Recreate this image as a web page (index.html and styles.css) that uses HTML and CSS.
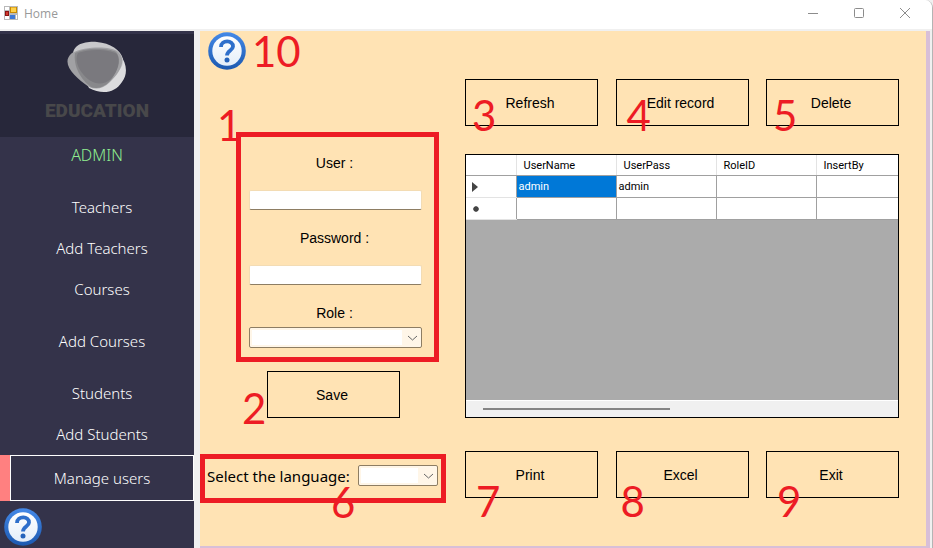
FILE: index.html
```html
<!DOCTYPE html>
<html lang="en">
<head>
<meta charset="utf-8">
<title>Home</title>
<link rel="stylesheet" href="styles.css">
</head>
<body>
<svg class="defs" aria-hidden="true">
  <defs>
    <linearGradient id="ring" x1="0" y1="0" x2="0" y2="1">
      <stop offset="0" stop-color="#4489e8"/><stop offset="1" stop-color="#1c59b0"/>
    </linearGradient>
    <linearGradient id="face" x1="0" y1="0" x2="0" y2="1">
      <stop offset="0" stop-color="#ffffff"/><stop offset="1" stop-color="#e4eef9"/>
    </linearGradient>
    <symbol id="help" viewBox="0 0 38 38">
      <circle cx="19" cy="19" r="18.8" fill="url(#ring)"/>
      <circle cx="19" cy="19" r="14.7" fill="url(#face)"/>
      <path d="M13 15 C13 7.600 25.400 7.600 25 14.600 C24.700 18.600 19 18.600 19 23.600" fill="none" stroke="#2e6fcb" stroke-width="3.8"/>
      <circle cx="19" cy="28" r="2.5" fill="#2563bb"/>
    </symbol>
  </defs>
</svg>
<div class="window">
  <header class="titlebar">
    <svg class="app-icon" viewBox="0 0 14 14" aria-hidden="true">
      <path d="M0 0H14V14H0Z" fill="#b9b9b9"/>
      <path d="M1 1H5V4H1ZM1 10H5V13H1Z" fill="#fff"/>
      <path d="M6 1H13V7H6Z" fill="#c98a00"/><path d="M7 1.500H12V6H7Z" fill="#ffd24a"/>
      <path d="M1 5H5V10H1Z" fill="#8c1313"/><path d="M2 6H4V9H2Z" fill="#d23a2e"/>
      <path d="M6 9H11V13H6Z" fill="#3c78d8"/><path d="M12 9H13V13H12Z" fill="#fff"/>
    </svg>
    <h1 class="title">Home</h1>
    <button class="win-btn" aria-label="Minimize"><svg viewBox="0 0 12 12"><path d="M1 6.500H11"/></svg></button>
    <button class="win-btn" aria-label="Maximize"><svg viewBox="0 0 12 12"><rect x="1.500" y="1.500" width="9" height="9" rx="1"/></svg></button>
    <button class="win-btn" aria-label="Close"><svg viewBox="0 0 12 12"><path d="M1 1L11 11M11 1L1 11"/></svg></button>
  </header>
  <div class="body">
    <aside class="sidebar">
      <div class="brand">
        <svg class="brand-mark" viewBox="0 0 60 52" aria-hidden="true">
          <path d="M53 14 C60 22 61 33 55 41 C48 52 35 54 22 47 L10 22 Z" fill="#dcdcde"/>
          <path d="M6 15 C5 3 19 0 30 1 C43 2 54 9 56 18 C57 24 53 30 46 34 L12 30 C8 24 6 18 6 15Z" fill="#c9c9cb"/>
          <path d="M5 12 C18 5 43 5 50 10 C61 18 53 32 43 41 C36 48 29 49 22 46 C7 36 -7 22 5 12Z" fill="#a1a1a4"/>
          <path d="M8 12 C20 6 42 7 49 11 C55 18 50 31 43 40 C36 47 30 48 24 46 C14 39 6 25 8 12Z" fill="#88888b"/>
          <path d="M11 12 C22 8 41 8 50 13 C54 20 51 30 44 38 C37 44 29 43 24 40 C15 35 6 21 11 12Z" fill="#7a797e"/>
        </svg>
        <strong class="brand-name">EDUCATION</strong>
      </div>
      <p class="role">ADMIN</p>
      <nav class="nav">
        <a href="#">Teachers</a>
        <a href="#">Add Teachers</a>
        <a href="#">Courses</a>
        <a href="#" class="spaced">Add Courses</a>
        <a href="#" class="spaced">Students</a>
        <a href="#">Add Students</a>
        <a href="#" class="active">Manage users</a>
      </nav>
      <button class="help side-help" aria-label="Help"><svg><use href="#help"/></svg></button>
    </aside>
    <main class="main">
      <section class="left">
        <div class="help-row">
          <button class="help" aria-label="Help"><svg><use href="#help"/></svg></button>
          <span class="num">10</span>
        </div>
        <form class="user-form">
          <span class="num mark n1">1</span>
          <div class="field"><label for="user">User :</label><input id="user" type="text"></div>
          <div class="field"><label for="pass">Password :</label><input id="pass" type="password"></div>
          <div class="field tight"><label for="role">Role :</label><select id="role"><option></option></select></div>
        </form>
        <div class="save-row"><button class="btn">Save</button><span class="num mark n2">2</span></div>
        <div class="language">
          <label for="lang">Select the language:</label>
          <select id="lang"><option></option></select>
          <span class="num mark n6">6</span>
        </div>
      </section>
      <section class="right">
        <div class="btn-row">
          <div class="cell"><button class="btn">Refresh</button><span class="num mark top">3</span></div>
          <div class="cell"><button class="btn">Edit record</button><span class="num mark top n4">4</span></div>
          <div class="cell"><button class="btn">Delete</button><span class="num mark top">5</span></div>
        </div>
        <div class="grid">
          <div class="grid-view">
            <table>
              <thead><tr><th class="rh"></th><th>UserName</th><th>UserPass</th><th>RoleID</th><th>InsertBy</th></tr></thead>
              <tbody>
                <tr><td class="rh"><svg viewBox="0 0 8 10"><path d="M1 0V10L7 5Z"/></svg></td><td class="selected">admin</td><td>admin</td><td></td><td></td></tr>
                <tr><td class="rh"><svg viewBox="0 0 8 10"><path d="M3 3L5 2L7 3L8 5L7 7L5 8L3 7L2 5Z"/></svg></td><td></td><td></td><td></td><td></td></tr>
              </tbody>
            </table>
          </div>
          <div class="scroll"><div class="thumb"></div></div>
        </div>
        <div class="btn-row">
          <div class="cell"><button class="btn">Print</button><span class="num mark low">7</span></div>
          <div class="cell"><button class="btn">Excel</button><span class="num mark low n8">8</span></div>
          <div class="cell"><button class="btn">Exit</button><span class="num mark low">9</span></div>
        </div>
      </section>
    </main>
  </div>
</div>
</body>
</html>
```
FILE: styles.css
```css
* { box-sizing: border-box; }
body { margin: 0; background: #f0f0f0; font: 14px/20px "Liberation Sans", sans-serif; color: #000; }
button { padding: 0; border: 0; background: none; font: inherit; color: inherit; }
.defs { position: absolute; width: 0; height: 0; }

.window { display: flex; flex-direction: column; min-height: 100vh; border-right: 1px solid #b4b4b4; border-top-right-radius: 8px; overflow: hidden; }
.titlebar { display: flex; align-items: center; height: 31px; padding: 0 4px 4px 4px; background: #fff; border-bottom: 2px solid #f0f0f0; }
.app-icon { width: 14px; height: 14px; }
.title { flex: 1; margin: 2px 0 0 6px; font: 12px/16px "Open Sans", sans-serif; color: #999; }
.win-btn { display: flex; align-items: center; justify-content: center; width: 46px; height: 24px; }
.win-btn svg { width: 12px; height: 12px; fill: none; stroke: #8c8c8c; stroke-width: 1; }

.body { display: flex; flex: 1; }
.sidebar { display: flex; flex-direction: column; flex: 0 0 194px; border-top: 3px solid #34334a; background: #34334a; color: #fff; font: 16px/20px "Noto Sans", sans-serif; }
.brand { display: flex; flex-direction: column; align-items: center; height: 103px; padding-top: 7px; background: #27273a; }
.brand-mark { width: 60px; height: 52px; }
.brand-name { margin-top: 6px; font: 900 19px/24px Roboto, sans-serif; color: #48484a; }
.role { margin: 0; line-height: 36px; text-align: center; color: #90ee90; font-weight: 300; }
.nav { display: flex; flex-direction: column; margin-top: 14px; }
.nav a { height: 41px; padding-left: 10px; line-height: 40px; text-align: center; color: #fff; text-decoration: none; font-size: 15px; font-weight: 300; }
.nav .spaced { margin-top: 11px; }
.nav .active { height: 46px; padding: 0; border: 1px solid #fff; margin-left: 10px; line-height: 44px; box-shadow: -10px 0 0 #ff8080; }
.help { display: block; width: 38px; height: 38px; }
.help svg { display: block; width: 38px; height: 38px; }
.side-help { margin: 7px 0 0 4px; }

.main { display: flex; flex: 1; gap: 19px; min-width: 0; margin-left: 6px; margin-right: 2px; padding-right: 27px; border-right: 4px solid #d8bfd8; border-bottom: 2px solid #d8bfd8; background: #ffe3b4; }
.left { flex: 0 0 246px; }
.right { flex: 1; min-width: 0; padding-top: 48px; }
.help-row { display: flex; align-items: center; gap: 6px; height: 40px; padding-left: 8px; }
.num { font: 42px/40px Lato, sans-serif; color: #ed1c24; }
.mark { position: absolute; pointer-events: none; }

.user-form { position: relative; display: flex; flex-direction: column; gap: 18px; margin: 61px 7px 9px 36px; padding: 16px 12px 9px 8px; border: 5px solid #ed1c24; }
.field { display: flex; flex-direction: column; gap: 17px; }
.field.tight { gap: 4px; }
.field label { padding-right: 2px; text-align: center; }
input { width: 100%; height: 20px; padding: 0 4px; border: 1px solid #f3dcb4; border-bottom-color: #8d7d63; border-radius: 2px; background: #fff; }
select { appearance: none; width: 100%; height: 21px; border: 1px solid #8d7d63; border-radius: 2px; box-shadow: inset 0 0 0 2px #fff6e8; background: #fff url("data:image/svg+xml,%3Csvg xmlns='http://www.w3.org/2000/svg' width='19' height='19'%3E%3Cpath fill='%23fff6e8' d='M0 0h19v19H0z'/%3E%3Cpath fill='none' stroke='%23666' d='M6 8l4.500 4 4.500-4'/%3E%3C/svg%3E") right center no-repeat; }
.save-row { position: relative; padding-left: 67px; }
.btn { display: block; width: 133px; height: 47px; padding-right: 3px; border: 1px solid #000; text-align: center; }
.language { position: relative; display: flex; align-items: center; justify-content: space-between; height: 49px; margin-top: 36px; padding: 0 3px 6px 2px; border: 5px solid #ed1c24; }
.language label { font: 15px/20px "Noto Sans", sans-serif; white-space: nowrap; }
.language select { width: 80px; }

.btn-row { display: flex; justify-content: space-between; }
.cell { position: relative; }
.n1 { left: -24px; top: -32px; }
.n2 { left: 42px; top: 17px; }
.n6 { left: 126px; top: 23px; }
.top { left: 7px; top: 16px; }
.low { left: 11px; top: 30px; }
.n4 { left: 11px; }
.n8 { left: 5px; }

.grid { display: flex; flex-direction: column; height: 264px; margin: 28px 0 33px; border: 1px solid #000; background: #ababab; }
.grid-view { flex: 1; overflow: hidden; }
table { width: 450px; table-layout: fixed; border-collapse: collapse; background: #fff; font: 11px/14px Roboto, sans-serif; }
th, td { height: 22px; padding: 2px 2px 0; border: 1px solid #a0a0a0; border-top: 0; text-align: left; font-weight: 400; }
th { width: 100px; height: 20px; padding-left: 7px; border-right-color: #e3e3e3; }
.rh { width: 50px; padding-left: 5px; border-left: 0; }
td.rh { border-bottom-color: #e3e3e3; }
.rh svg { display: block; width: 8px; height: 10px; fill: #444; }
.selected { background: #0078d7; color: #fff; }
.scroll { height: 17px; padding: 7px 0 0 17px; border-top: 1px solid #fff; background: #f0f0f0; }
.thumb { width: 45%; height: 2px; background: #858585; }
```
